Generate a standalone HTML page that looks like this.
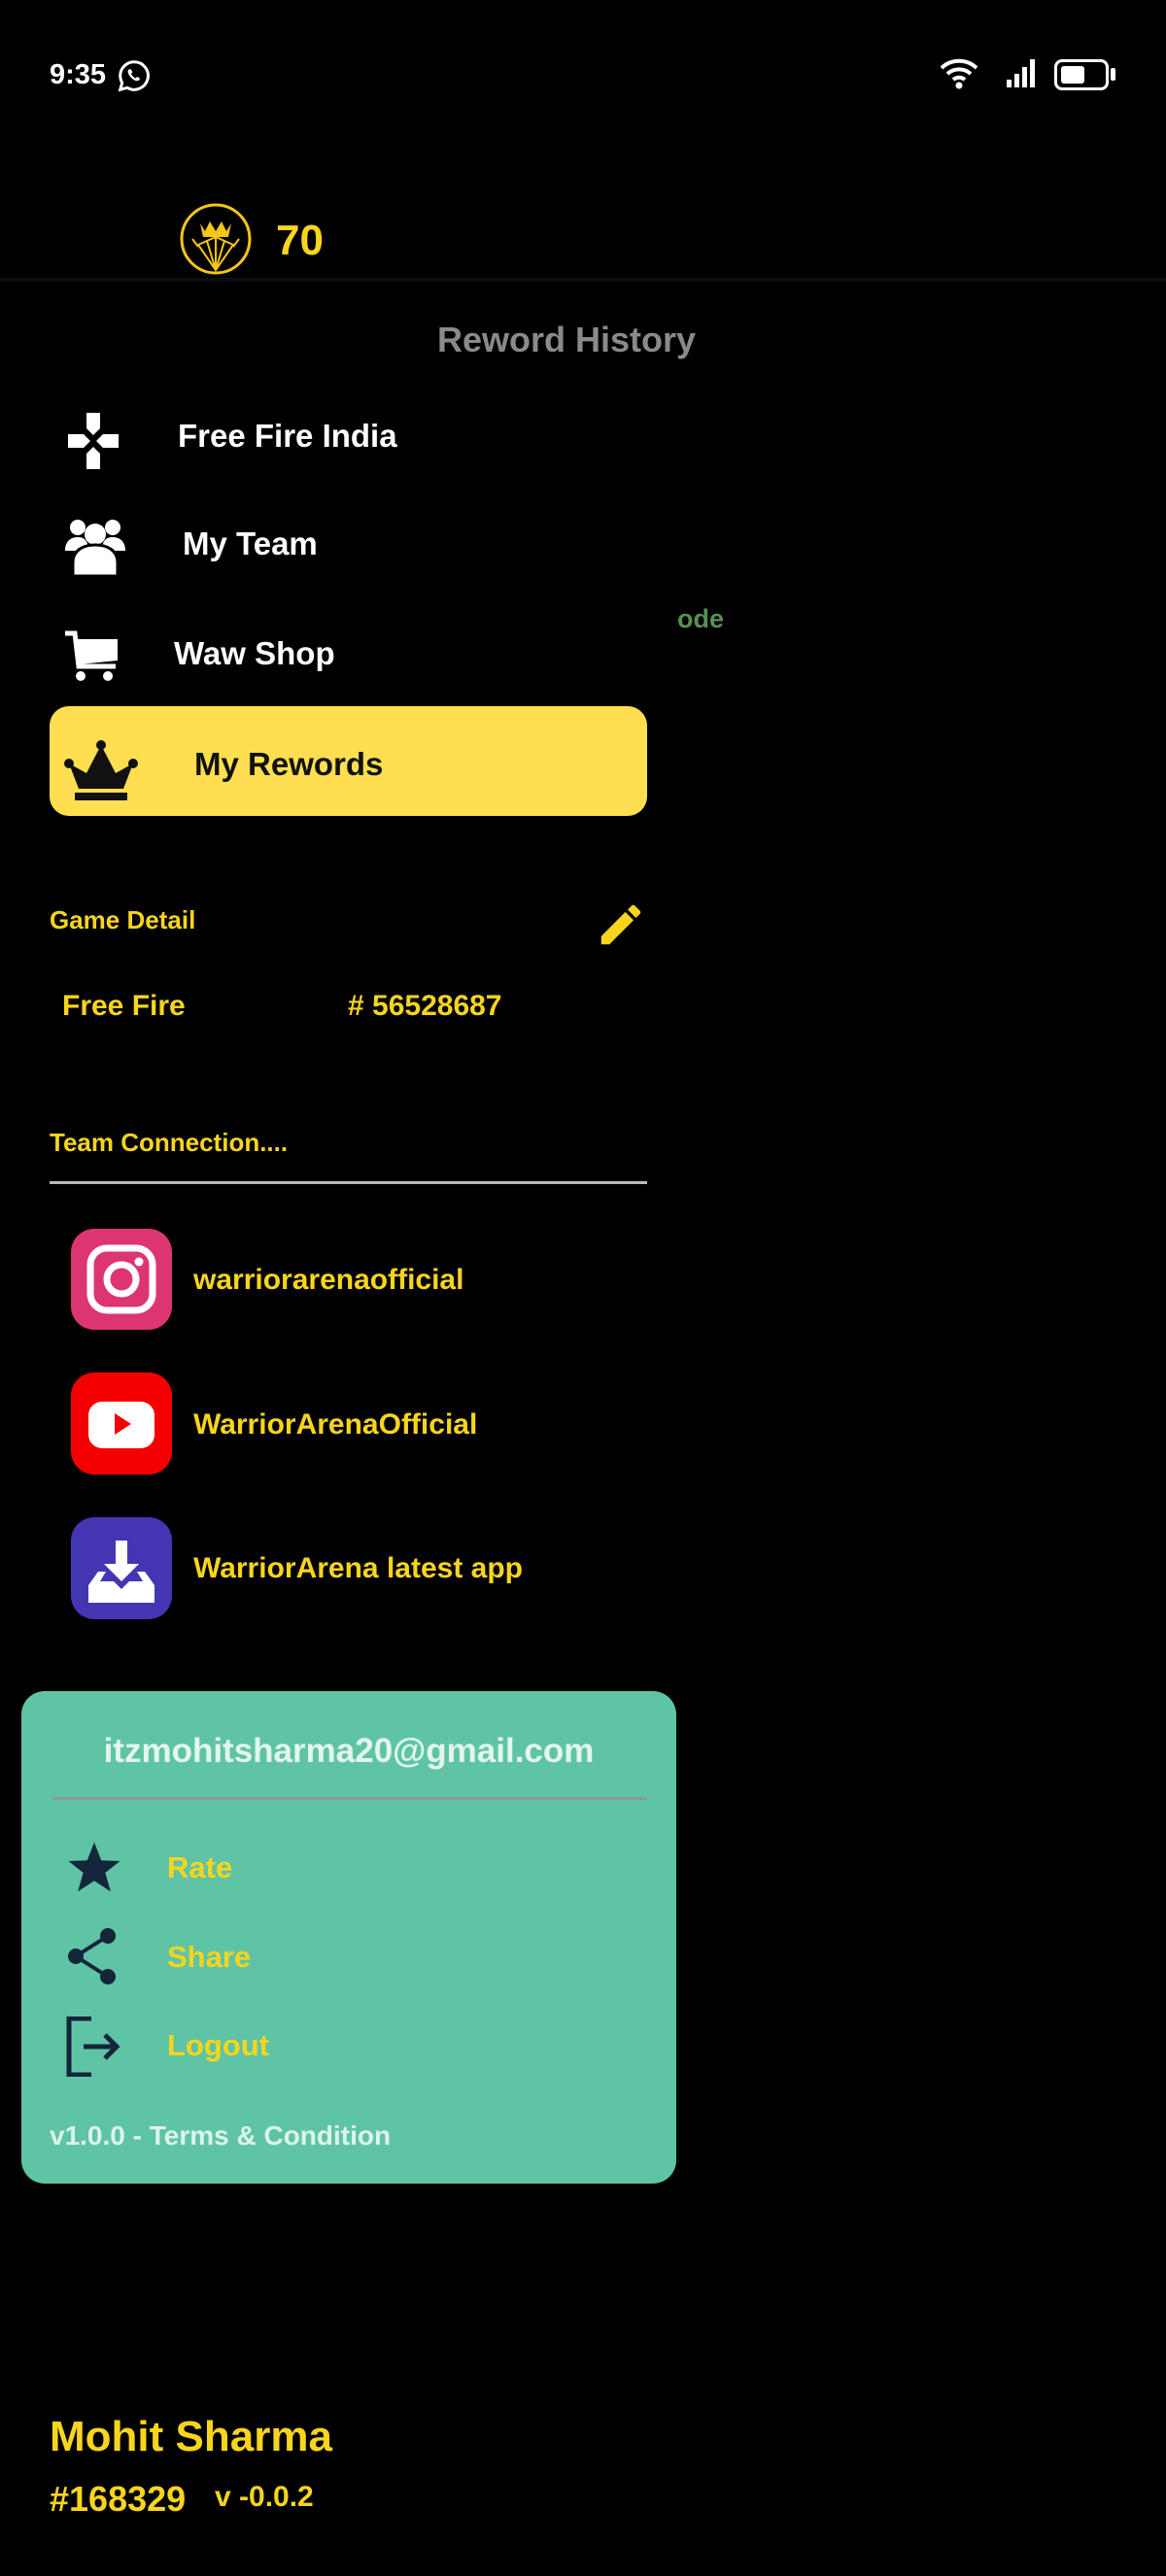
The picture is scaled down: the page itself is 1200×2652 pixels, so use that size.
<!DOCTYPE html>
<html><head><meta charset="utf-8"><style>
*{margin:0;padding:0;box-sizing:border-box}
body{width:1200px;height:2652px;background:#000;position:relative;overflow:hidden;font-family:"Liberation Sans",sans-serif;font-weight:bold}
.a{position:absolute;white-space:nowrap;line-height:1}
.w{color:#fff}.y{color:#F7D51D}
</style></head><body>
<!-- status bar -->
<div class="a w" style="left:51px;top:63px;font-size:29px">9:35</div>
<svg class="a" style="left:120px;top:60px" width="36" height="36" viewBox="0 0 24 24"><path d="M12 2.5a9.5 9.5 0 0 0-8.2 14.3L2.5 21.5l4.8-1.3A9.5 9.5 0 1 0 12 2.5z" fill="none" stroke="#fff" stroke-width="2"/><path d="M8.5 7.5c-.5.5-1 1.4-.5 2.8.7 2 2.8 4.2 5 5 1.3.5 2.2 0 2.7-.6l.2-1-1.9-1-.9 1c-1.3-.5-2.6-1.8-3.1-3.1l.9-.9-.9-2z" fill="#fff"/></svg>
<svg class="a" style="left:965px;top:58px" width="44" height="36" viewBox="0 0 44 36"><path d="M4 12a26 26 0 0 1 36 0M10 18a18 18 0 0 1 24 0M16 24a9 9 0 0 1 12 0" fill="none" stroke="#fff" stroke-width="4"/><circle cx="22" cy="30" r="3.5" fill="#fff"/></svg>
<svg class="a" style="left:1034px;top:58px" width="36" height="34" viewBox="0 0 36 34"><rect x="2" y="24" width="5" height="8" fill="#fff"/><rect x="10" y="18" width="5" height="14" fill="#fff"/><rect x="18" y="11" width="5" height="21" fill="#fff"/><rect x="26" y="3" width="5" height="29" fill="#fff"/></svg>
<div class="a" style="left:1085px;top:61px;width:56px;height:32px;border:3px solid #fff;border-radius:8px"><div style="margin:4px;width:24px;height:18px;background:#fff;border-radius:3px"></div></div>
<div class="a" style="left:1143px;top:70px;width:5px;height:13px;background:#fff;border-radius:2px"></div>
<!-- coin -->
<svg class="a" style="left:184px;top:208px" width="76" height="76" viewBox="0 0 76 76"><circle cx="38" cy="38" r="35" fill="#000" stroke="#F5C518" stroke-width="3"/><path d="M22 22l5 8 5-10 6 10 6-10 5 10 5-8-3 14H25z" fill="#F5C518"/><path d="M38 70L20 44l18-8 18 8zM38 70l-9-30M38 70l9-30M38 70V36M14 38l6 8M62 38l-6 8" fill="none" stroke="#F5C518" stroke-width="2"/></svg>
<div class="a y" style="left:284px;top:226px;font-size:44px">70</div>
<div class="a" style="left:0;top:286px;width:1200px;height:4px;background:#0d0d0d"></div>
<div class="a" style="left:450px;top:332px;font-size:36px;color:#8a8a8a">Reword History</div>
<!-- menu -->
<svg class="a" style="left:70px;top:425px" width="52" height="58" viewBox="0 0 52 58"><path d="M19 0h14v16L26 23 19 16zM0 22h16l7 7-7 7H0zM52 22H36l-7 7 7 7h16zM19 58h14V42l-7-7-7 7z" fill="#fff"/></svg>
<div class="a w" style="left:183px;top:432px;font-size:33px">Free Fire India</div>
<svg class="a" style="left:65px;top:533px" width="66" height="60" viewBox="0 0 66 60"><circle cx="15" cy="10" r="8" fill="#fff"/><circle cx="51" cy="10" r="8" fill="#fff"/><circle cx="33" cy="17" r="11" fill="#fff"/><path d="M2 34c0-10 6-14 13-14s11 4 11 14zM40 34c0-10 4-14 11-14s13 4 13 14z" fill="#fff"/><path d="M10 60V46c0-12 10-18 23-18s23 6 23 18v14z" fill="#fff" stroke="#000" stroke-width="3"/></svg>
<div class="a w" style="left:188px;top:543px;font-size:33px">My Team</div>
<svg class="a" style="left:65px;top:648px" width="58" height="56" viewBox="0 0 58 56"><path d="M2 4h10l4 34h38" fill="none" stroke="#fff" stroke-width="5"/><path d="M14 10h42v22l-40 4z" fill="#fff"/><circle cx="18" cy="48" r="5" fill="#fff"/><circle cx="46" cy="48" r="5" fill="#fff"/></svg>
<div class="a w" style="left:179px;top:656px;font-size:33px">Waw Shop</div>
<div class="a" style="left:51px;top:727px;width:615px;height:113px;background:#FFDF4F;border-radius:20px"></div>
<svg class="a" style="left:65px;top:762px" width="78" height="62" viewBox="0 0 78 62"><circle cx="39" cy="5" r="5" fill="#111"/><circle cx="6" cy="24" r="5" fill="#111"/><circle cx="72" cy="24" r="5" fill="#111"/><path d="M6 24l18 10L39 5l15 29 18-10-10 26H16z" fill="#111"/><rect x="12" y="54" width="54" height="8" fill="#111"/></svg>
<div class="a" style="left:200px;top:770px;font-size:33px;color:#111">My Rewords</div>
<div class="a" style="left:697px;top:624px;font-size:27px;color:#5a8f55">ode</div>
<!-- game detail -->
<div class="a y" style="left:51px;top:934px;font-size:26px">Game Detail</div>
<svg class="a" style="left:612px;top:925px" width="54" height="54" viewBox="0 0 24 24"><path d="M3 17.25V21h3.75L17.8 9.94l-3.75-3.75zM20.7 7.04a1 1 0 0 0 0-1.41l-2.34-2.34a1 1 0 0 0-1.41 0l-1.83 1.83 3.75 3.75z" fill="#F7D51D"/></svg>
<div class="a y" style="left:64px;top:1021px;font-size:30px">Free Fire</div>
<div class="a y" style="left:358px;top:1021px;font-size:30px"># 56528687</div>
<div class="a y" style="left:51px;top:1163px;font-size:26px">Team Connection....</div>
<div class="a" style="left:51px;top:1216px;width:615px;height:3px;background:#bbb"></div>
<!-- socials -->
<div class="a" style="left:73px;top:1265px;width:104px;height:104px;background:#DD3572;border-radius:24px"></div>
<svg class="a" style="left:73px;top:1265px" width="104" height="104" viewBox="0 0 104 104"><rect x="20" y="20" width="64" height="64" rx="17" fill="none" stroke="#fff" stroke-width="7"/><circle cx="52" cy="52" r="15" fill="none" stroke="#fff" stroke-width="7"/><circle cx="70" cy="34" r="4.5" fill="#fff"/></svg>
<div class="a y" style="left:199px;top:1303px;font-size:30px">warriorarenaofficial</div>
<div class="a" style="left:73px;top:1413px;width:104px;height:105px;background:#F40000;border-radius:24px"></div>
<svg class="a" style="left:73px;top:1413px" width="104" height="105" viewBox="0 0 104 105"><rect x="18" y="30" width="68" height="48" rx="14" fill="#fff"/><path d="M45 42l17 11-17 11z" fill="#F40000"/></svg>
<div class="a y" style="left:199px;top:1452px;font-size:30px">WarriorArenaOfficial</div>
<div class="a" style="left:73px;top:1562px;width:104px;height:105px;background:#4436B2;border-radius:24px"></div>
<svg class="a" style="left:73px;top:1562px" width="104" height="105" viewBox="0 0 104 105"><path d="M46 24h12v24h12L52 66 34 48h12z" fill="#fff"/><path d="M18 70l10-14h8l-6 10h14l8 8 8-8h14l-6-10h8l10 14v18H18z" fill="#fff"/></svg>
<div class="a y" style="left:199px;top:1600px;font-size:30px">WarriorArena latest app</div>
<!-- green card -->
<div class="a" style="left:22px;top:1741px;width:674px;height:507px;background:#5FC4A6;border-radius:24px"></div>
<div class="a" style="left:22px;top:1785px;width:674px;text-align:center;font-size:35px;color:#E3F6EE">itzmohitsharma20@gmail.com</div>
<div class="a" style="left:54px;top:1850px;width:612px;height:3px;background:#8a9a94"></div>
<svg class="a" style="left:68px;top:1893px" width="58" height="58" viewBox="0 0 24 24"><path d="M12 1.5l3 7.7 8 .3-6.3 5 2.3 8-7-4.6-7 4.6 2.3-8L1 9.5l8-.3z" fill="#13263A"/></svg>
<div class="a y" style="left:172px;top:1907px;font-size:31px">Rate</div>
<svg class="a" style="left:68px;top:1983px" width="54" height="62" viewBox="0 0 54 62"><circle cx="43" cy="10" r="8" fill="#13263A"/><circle cx="10" cy="31" r="8" fill="#13263A"/><circle cx="43" cy="52" r="8" fill="#13263A"/><path d="M43 10L10 31l33 21" fill="none" stroke="#13263A" stroke-width="4"/></svg>
<div class="a y" style="left:172px;top:1999px;font-size:31px">Share</div>
<svg class="a" style="left:68px;top:2076px" width="56" height="62" viewBox="0 0 56 62"><path d="M26 2H3v58h23" fill="none" stroke="#13263A" stroke-width="5"/><path d="M18 31h34M40 19l12 12-12 12" fill="none" stroke="#13263A" stroke-width="5"/></svg>
<div class="a y" style="left:172px;top:2090px;font-size:31px">Logout</div>
<div class="a" style="left:51px;top:2185px;font-size:28px;color:#DDF4EC">v1.0.0 - Terms &amp; Condition</div>
<!-- footer -->
<div class="a y" style="left:51px;top:2487px;font-size:44px">Mohit Sharma</div>
<div class="a y" style="left:51px;top:2555px;font-size:36px">#168329</div>
<div class="a y" style="left:221px;top:2556px;font-size:30px">v -0.0.2</div>
</body></html>
